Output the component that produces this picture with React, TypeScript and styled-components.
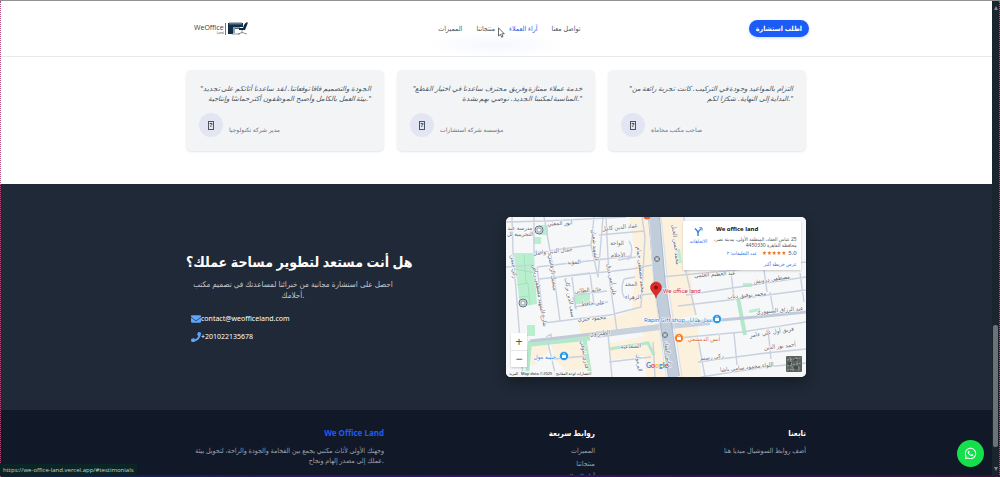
import React from "react";
import styled, { createGlobalStyle } from "styled-components";
import { FaEnvelope, FaPhone, FaWhatsapp } from "react-icons/fa";

const narrow = `"Noto Sans", "DejaVu Sans Condensed", "DejaVu Sans", sans-serif`;
const regular = `"Noto Sans", "DejaVu Sans", sans-serif`;

const GlobalStyle = createGlobalStyle`
  * { box-sizing: border-box; }
  body {
    margin: 0;
    background: #fff;
    font-family: ${narrow};
    color: #4b5563;
  }
  h2, h3, p, ul, figure, blockquote { margin: 0; padding: 0; }
  ul { list-style: none; }
  a { color: inherit; text-decoration: none; }
`;

const Window = styled.div`
  position: relative;
  display: grid;
  grid-template-columns: minmax(0, 1fr) 8px;
  grid-template-rows: 100%;
  height: 100vh;
  overflow: hidden;
  border-top: 1px solid #929292;
`;

const Page = styled.div`
  min-width: 0;
  display: flex;
  flex-direction: column;
  overflow: hidden;
`;

const Container = styled.div<{ $wide?: boolean }>`
  width: 100%;
  max-width: ${(p) => (p.$wide ? 626 : 620)}px;
  margin: 0 auto;
`;

const Header = styled.header`
  flex: none;
  background: radial-gradient(ellipse 72px 12px at 50% 44px, #f5f7fe, #fff);
  border-bottom: 1px solid #e8eaed;
`;

const HeaderRow = styled(Container)`
  display: flex;
  justify-content: space-between;
  align-items: center;
  height: 55px;
`;

const LogoLink = styled.a`
  display: flex;
  align-items: center;
  gap: 2px;
  width: 87px;
  padding-left: 11px;
  svg { display: block; }
`;

const LogoWords = styled.span`
  display: grid;
  justify-items: end;
  padding-right: 1px;
  border-right: 1px solid #6b7780;
  font: 7px/9px "Open Sans", sans-serif;
  color: #33424d;
  small { font-size: 3px; line-height: 3px; }
`;

const Nav = styled.nav`
  display: flex;
  gap: 14px;
`;

const NavLink = styled.a<{ $active?: boolean }>`
  font-size: 7px;
  line-height: 12px;
  color: ${(p) => (p.$active ? "#2563eb" : "#4b5563")};
`;

const ConsultButton = styled.button`
  height: 17px;
  padding: 0 7px;
  border: 0;
  border-radius: 9px;
  background: #1b5cf5;
  color: #fff;
  font: 700 7px/16px ${narrow};
  box-shadow: 0 1px 3px #1b5cf540;
`;

const Testimonials = styled.section`
  flex: none;
  padding: 13px 0 33px;
  background: #fff;
`;

const CardGrid = styled(Container)`
  display: grid;
  grid-template-columns: repeat(3, 1fr);
  gap: 13px;
`;

const Card = styled.figure`
  min-height: 81px;
  padding: 14px 13px;
  border-radius: 5px;
  background: #f3f4f6;
  box-shadow: 0 1px 2px #0000001a;
`;

const Quote = styled.blockquote`
  font-family: ${regular};
  font-size: 7px;
  line-height: 10px;
  font-style: italic;
  text-align: right;
  white-space: pre-line;
`;

const Author = styled.figcaption`
  display: flex;
  align-items: center;
  gap: 6px;
  margin-top: 9px;
  font-size: 6px;
  line-height: 8px;
  color: #6b7280;
`;

const Avatar = styled.span`
  display: grid;
  place-items: center;
  width: 24px;
  height: 24px;
  border-radius: 50%;
  background: #e3e6f2;
`;

const MissingGlyph = styled.span`
  width: 6px;
  height: 9px;
  border: 1px solid #4b5563;
  font-size: 6px;
  font-weight: 700;
  line-height: 7px;
  text-align: center;
  color: #1f2937;
`;

const Role = styled.span`
  padding-top: 9px;
  font-family: ${regular};
`;

const Contact = styled.section`
  flex: none;
  padding: 33px 0;
  background: #1f2937;
`;

const ContactGrid = styled(Container)`
  display: grid;
  grid-template-columns: 1fr 1fr;
  gap: 20px;
  align-items: center;
`;

const Pitch = styled.div`
  justify-self: start;
  color: #fff;
  h2 { font-size: 14px; line-height: 20px; font-weight: 700; }
`;

const Lead = styled.p`
  width: 214px;
  margin-top: 6px;
  font-size: 8px;
  line-height: 11px;
  text-align: center;
  white-space: pre-line;
  color: #c3c8d0;
`;

const ContactLink = styled.a`
  display: flex;
  align-items: center;
  margin: 6px 0 0 5px;
  font-size: 7px;
  line-height: 12px;
  svg { color: #60a5fa; }
`;

const Links = styled.div`
  margin-top: 13px;
`;

const MapFrame = styled.div`
  position: relative;
  overflow: hidden;
  border-radius: 5px;
  background: #f5f6f8;
  box-shadow: 0 6px 14px #0000004d;
  > svg { display: block; width: 100%; }
`;

const PlaceCard = styled.aside`
  position: absolute;
  top: 4px;
  right: 5px;
  width: 118px;
  height: 49px;
  display: grid;
  grid-template-columns: 31px 1fr;
  padding: 4px 5px 0 0;
  background: #fff;
  box-shadow: 0 1px 2px #0003;
  font-size: 5px;
  line-height: 6px;
`;

const Directions = styled.a`
  display: flex;
  flex-direction: column;
  align-items: center;
  gap: 2px;
  padding-top: 2px;
  color: #1a73e8;
`;

const PlaceInfo = styled.div`
  text-align: right;
  white-space: nowrap;
  strong {
    display: block;
    margin-bottom: 3px;
    padding-left: 2px;
    font: 700 6px/8px "Noto Sans", sans-serif;
    color: #111;
    text-align: left;
  }
  a { color: #1a73e8; }
`;

const Rating = styled.p`
  display: flex;
  justify-content: flex-end;
  align-items: center;
  gap: 2px;
  margin: 2px 0 4px;
  line-height: 7px;
  b { font-weight: 400; font-size: 6px; }
  span { color: #e7711b; font-size: 6px; }
  a { margin-right: 3px; }
`;

const ZoomBox = styled.div`
  position: absolute;
  left: 5px;
  bottom: 10px;
  width: 16px;
  display: grid;
  background: #fff;
  box-shadow: 0 1px 2px #0003;
`;

const ZoomButton = styled.button`
  height: 17px;
  padding: 0;
  border: 0;
  background: none;
  font: 12px/16px "Liberation Sans", sans-serif;
  color: #555;
  & + & { border-top: 1px solid #e6e6e6; }
`;

const Footer = styled.footer`
  flex: 1 0 auto;
  padding: 16px 0 20px;
  background: #111827;
  color: #9ca3af;
  font-size: 7px;
  line-height: 10px;
`;

const FooterColumn = styled.div`
  text-align: right;
  p { white-space: pre-line; margin-top: 6px; }
  ul { margin-top: 6px; }
  li { margin-bottom: 3px; }
`;

const FooterTitle = styled.h3<{ $brand?: boolean }>`
  font-size: 8px;
  line-height: 14px;
  font-weight: 700;
  color: ${(p) => (p.$brand ? "#1f5bf2" : "#fff")};
`;

const ScrollTrack = styled.div`
  display: flex;
  flex-direction: column;
  align-items: center;
  justify-content: space-between;
  padding: 3px 0 4px;
  background: #1b252d;
  border-right: 1px dotted #b0507c;
`;

const ScrollArrow = styled.i<{ $down?: boolean }>`
  border: 2px solid transparent;
  border-${(p) => (p.$down ? "top" : "bottom")}: 4px solid #87898c;
`;

const ScrollThumb = styled.span`
  width: 5px;
  height: 26%;
  margin: auto 0 20px;
  border-radius: 2px;
  background: #6b7278;
`;

const StatusBar = styled.output`
  position: absolute;
  left: 0;
  bottom: 1px;
  padding: 0 3px;
  background: #0b2526;
  color: #c5d0cf;
  font: 6px/12px "Open Sans", sans-serif;
`;

const BottomLine = styled.div`
  position: absolute;
  left: 0;
  right: 0;
  bottom: 0;
  height: 2px;
  background: linear-gradient(90deg, #14213a, #14205a 12%, #35106a 45%, #3a0d55 80%, #3b1138);
`;

const LeftEdge = styled.div`
  position: absolute;
  left: 0;
  top: 0;
  bottom: 0;
  border-left: 1px dotted #b0507c;
`;

const ChatButton = styled.a`
  position: absolute;
  right: 16px;
  bottom: 10px;
  width: 27px;
  height: 27px;
  display: grid;
  place-items: center;
  border-radius: 50%;
  background: #15e04c;
  color: #fff;
`;

const Pointer = styled.svg`
  position: absolute;
  left: 498px;
  top: 26px;
`;

const reviews = [
  {
    quote: "\"الجودة والتصميم فاقا توقعاتنا. لقد ساعدنا أثاثكم على تجديد\nبيئة العمل بالكامل وأصبح الموظفون أكثر حماسًا وإنتاجية.\"",
    role: "مدير شركة تكنولوجيا",
  },
  {
    quote: "\"خدمة عملاء ممتازة وفريق محترف ساعدنا في اختيار القطع\nالمناسبة لمكتبنا الجديد. نوصي بهم بشدة.\"",
    role: "مؤسسة شركة استشارات",
  },
  {
    quote: "\"التزام بالمواعيد وجودة في التركيب. كانت تجربة رائعة من\nالبداية إلى النهاية. شكرًا لكم.\"",
    role: "صاحب مكتب محاماة",
  },
];

const navItems = [
  { label: "المميزات", href: "#features" },
  { label: "منتجاتنا", href: "#products" },
  { label: "آراء العملاء", href: "#testimonials", active: true },
  { label: "تواصل معنا", href: "#contact" },
];

/* street name, centre x, centre y, angle */
const streets: [string, number, number, number][] = [
  ["أنور المفتي", 54, 8, -3],
  ["مدرسة عبد", 14, 13, 0],
  ["التجريبية لل", 14, 19, 0],
  ["عماد الدين كامل", 114, 12, -6],
  ["جمال الدين واصل", 47, 36, -6],
  ["الواحة", 111, 28, 0],
  ["الأحلام", 112, 40, 0],
  ["المؤيد", 68, 47, -2],
  ["حاتم الطائي", 82, 75, -4],
  ["علي حافظ", 87, 88, -4],
  ["محمود خيري", 86, 103, -4],
  ["الطيراوي", 94, 118, -5],
  ["الشماعية", 125, 131, -3],
  ["زكي حسن", 6, 50, 84],
  ["شارع الشهيد مصطفى رياض", 32, 79, 80],
  ["ميشيل الرقاشي", 45, 56, 82],
  ["سيف الدين بركات", 62, 81, 80],
  ["الشهيد شعبان", 87, 28, 84],
  ["علي أمين رزق", 104, 63, 80],
  ["محمد مصطفى حمام", 133, 53, 84],
  ["المجد", 125, 69, 0],
  ["الزهراء", 127, 82, 0],
  ["قدري شوقي", 77, 138, 80],
  ["اليرموك", 131, 146, 82],
  ["عبد العظيم العلمي", 209, 59, -4],
  ["مصطفى درويش", 266, 64, -8],
  ["محمد توفيق دياب", 241, 80, -5],
  ["عبد الرزاق السنهوري", 274, 95, -5],
  ["فريق أول علي عامر", 266, 117, -9],
  ["أحمد نور الدين", 274, 131, -6],
  ["زكي رستم", 206, 142, -6],
  ["اللواء محمود سامي باشا", 241, 152, -6],
  ["محمد حسن الجبل", 168, 28, 84],
  ["عباس العقاد", 160, 138, 82],
];

const minorRoads =
  "M0 5L40 4L120 0M6 0L7 35L17 160M38 0L46 45L54 104M0 50L28 48M28 36L85 28L88 0M85 28L92 60L97 0M28 36L28 0M31 50L90 43L126 39M33 62L52 60L126 52L146 48M31 50L38 106M52 60L84 56M68 78L101 74M68 90L102 85M84 56L88 88M66 60L70 92L67 80M38 106L70 102L104 98L135 90L139 20L136 0M100 0L103 60L111 114M93 18L138 14M123 24Q129 33 122 43M112 43L130 40M118 62Q114 72 118 80L128 83M118 62L129 60M135 78L152 76M40 120L45 117L45 124M42 126L50 160M48 142L80 139M102 117L106 160M103 145L145 140M147 125L149 160M178 0L180 55L190 98M155 60L230 53L300 45M180 78L300 60M172 89L232 82L300 73M225 56L228 80M258 53L261 75M264 75L268 98M294 56L298 85M172 121L236 115L300 105M192 121L199 160M228 116L231 148M262 112L265 142M192 145L260 136L300 132M195 160L260 150L300 146";

const Badge = ({ x, y, color }: { x: number; y: number; color: string }) => (
  <g>
    <circle cx={x} cy={y} r="4.5" fill={color} stroke="#fff" strokeWidth=".6" />
    <rect x={x - 2} y={y - 1} width="4" height="3" rx=".5" fill="#fff" />
    <path d={`M${x - 1} ${y - 1}v-.6a1 1 0 0 1 2 0v.6`} fill="none" stroke="#fff" strokeWidth=".6" />
  </g>
);

const Metro = ({ x, y, r }: { x: number; y: number; r: number }) => (
  <g fill="#fff" stroke="#60727d">
    <circle cx={x} cy={y} r={r} strokeWidth="1" />
    <rect x={x - r / 2} y={y - r / 2} width={r} height={r} rx=".5" strokeWidth=".8" />
  </g>
);

const StreetMap = () => (
  <svg viewBox="0 0 300 160" role="img" aria-label="We office land">
    <rect width="300" height="160" fill="#f6f7f9" />
    <g fill="#fcf1dc">
      <path d="M123 0H146L150 50L158 160H140L136 95L126 95L130 40Z" />
      <path d="M155 0H177L185 60L190 98L166 103Z" />
      <path d="M72 105L108 100L134 91L154 88V106L75 117Z" />
      <path d="M46 128L78 123L84 152L60 154L48 142Z" />
      <path d="M22 128L42 126L43 134L26 150Z" />
      <path d="M170 108L192 106L195 160H174Z" />
      <path d="M103 126L146 118V138L104 143Z" />
    </g>
    <g fill="#b9efce">
      <path d="M8 36H28L31 87L14 90Z" />
      <rect x="27" y="20" width="8" height="7" />
      <rect x="33" y="8" width="9" height="10" />
      <rect x="69" y="76" width="15" height="11" />
      <rect x="21" y="108" width="8" height="11" />
      <rect x="237" y="66" width="9" height="4" />
      <path d="M243 93L254 91V94L243 96ZM170 32L174 32L176 46L172 46Z" />
    </g>
    <g stroke="#b4e8ca" fill="none">
      <path d="M25 127L84 121" strokeWidth="5" />
      <path d="M24 124L21 160M78 120L84 156" strokeWidth="4" />
      <path d="M232 81L239 118" strokeWidth="4" />
      <path d="M103 132L142 126L148 138M172 108L192 102" strokeWidth="3" />
      <path d="M9 52L29 56M11 68L22 66L24 88M18 38L20 66M13 80L23 79" stroke="#92d9ae" strokeWidth=".6" />
    </g>
    <path d={minorRoads} fill="none" stroke="#c9d1de" strokeWidth="1.4" strokeLinejoin="round" />
    <path d="M24 124L60 120L103 115L154 109L204 104L250 100L300 95" fill="none" stroke="#c0cad8" strokeWidth="3" />
    <path d="M90 118L154 110L204 105" fill="none" stroke="#c8d2df" strokeWidth="6" />
    <path d="M148 0L154 68L168 160" fill="none" stroke="#adb9ca" strokeWidth="12" />
    <path d="M148 0L154 68L168 160" fill="none" stroke="#c2cddb" strokeWidth="10" />
    <path d="M143 0L148 68L160 160M155 0L162 68L176 160" fill="none" stroke="#d8dfe9" strokeWidth="1" />
    <g fontSize="6" fill="#5f6875" stroke="#fff" strokeWidth="1" paintOrder="stroke" textAnchor="middle">
      {streets.map(([name, x, y, angle]) => (
        <text key={name} x={x} y={y} transform={`rotate(${angle} ${x} ${y})`}>{name}</text>
      ))}
    </g>
    <Metro x={33} y={13} r={4} />
    <Metro x={17} y={86} r={4} />
    <Metro x={151} y={42} r={2.5} />
    <Metro x={159} y={118} r={2.5} />
    <Badge x={58} y={139} color="#1c95e8" />
    <Badge x={211} y={102} color="#1c95e8" />
    <Badge x={173} y={121} color="#f27b24" />
    <circle cx="141" cy="-1" r="3.5" fill="#f0642b" />
    <g fontSize="6" stroke="#fff" strokeWidth="1" paintOrder="stroke">
      <text x="39" y="142" fill="#2b7fdc" textAnchor="middle">حبيبة مول</text>
      <g fill="#2b7fdc" fontFamily={`Roboto, "DejaVu Sans Condensed", sans-serif`}>
        <text x="138" y="105">Rapin Gift shop</text>
        <text x="206" y="105" textAnchor="end">محل هدايا</text>
      </g>
      <text x="198" y="124" fill="#dd6a1c" textAnchor="middle">أنس الدمشقي</text>
      <text x="157" y="76" fill="#c9253b" fontFamily="Roboto, sans-serif">We office land</text>
    </g>
    <path d="M150 81C149.500 76.500 144.500 75 144.500 70.500a5.500 5.500 0 0 1 11 0C155.500 75 150.500 76.500 150 81Z" fill="#e02a2a" stroke="#b31412" strokeWidth=".5" />
    <circle cx="150" cy="70.500" r="2" fill="#8c1111" />
    <text x="140" y="151" fontSize="7" fontWeight="700" fontFamily="Lato, sans-serif">
      <tspan fill="#4285f4">G</tspan><tspan fill="#ea4335">o</tspan><tspan fill="#fbbc05">o</tspan><tspan fill="#4285f4">g</tspan><tspan fill="#34a853">l</tspan><tspan fill="#ea4335">e</tspan>
    </text>
    <rect y="154" width="86" height="6" fill="#f5f5f5" opacity=".8" />
    <g fontSize="4" fill="#222">
      <text x="3" y="158">المزيد</text>
      <text x="15" y="158">Map data ©2025</text>
      <text x="50" y="158">اختصارات لوحة المفاتيح</text>
    </g>
    <rect x="280" y="139" width="16" height="16" rx="1" fill="#5c6260" />
    <path d="M281 143l14-2M281 149l14-3M284 140l3 14M290 140l3 14M281 153l13-2" stroke="#9aa09c" strokeWidth="1" strokeDasharray="2 1" />
    <path d="M282 145h3v3h-3zM288 142h3v2h-3zM288 149h4v3h-4z" fill="#454c4a" />
  </svg>
);

const DeskLogo = () => (
  <svg width="20" height="13" viewBox="0 0 20 13">
    <path d="M0 1H15V5H11V7H5V12H0Z" fill="#12304a" />
    <path d="M1 .5H14V2.500H1Z" fill="#5f7685" />
    <path d="M5 5H12V6.500H7V11H5Z" fill="#8da0ab" />
    <path d="M11 6H15L16 3L18 .5H20L17 8H11Z" fill="#12293a" />
    <path d="M4 12H12M14 8V11M10 12L14 10.500L19 12" stroke="#596872" strokeWidth=".7" fill="none" />
  </svg>
);

const TurnIcon = () => (
  <svg width="9" height="9" viewBox="0 0 9 9" fill="none" stroke="#3f83d8">
    <path d="M4 9V6Q4 4.500 2.500 3L1 1.500M4 6Q4 4 7 2" strokeWidth="1.500" />
    <path d="M5.300 .8H8V3.500" strokeWidth="1" />
  </svg>
);

export default function App() {
  return (
    <Window>
      <GlobalStyle />
      <Page>
        <Header>
          <HeaderRow $wide>
            <LogoLink href="#home" aria-label="We Office Land">
              <LogoWords>WeOffice<small>Land</small></LogoWords>
              <DeskLogo />
            </LogoLink>
            <Nav>
              {navItems.map((item) => (
                <NavLink key={item.href} href={item.href} $active={item.active}>{item.label}</NavLink>
              ))}
            </Nav>
            <ConsultButton type="button">اطلب استشارة</ConsultButton>
          </HeaderRow>
        </Header>
        <Testimonials id="testimonials">
          <CardGrid>
            {reviews.map((review) => (
              <Card key={review.role}>
                <Quote>{review.quote}</Quote>
                <Author>
                  <Avatar><MissingGlyph>?</MissingGlyph></Avatar>
                  <Role>{review.role}</Role>
                </Author>
              </Card>
            ))}
          </CardGrid>
        </Testimonials>
        <Contact id="contact">
          <ContactGrid>
            <Pitch>
              <h2>هل أنت مستعد لتطوير مساحة عملك؟</h2>
              <Lead>{"احصل على استشارة مجانية من خبرائنا لمساعدتك في تصميم مكتب\nأحلامك."}</Lead>
              <Links>
                <ContactLink href="mailto:contact@weofficeland.com"><FaEnvelope size={10} />contact@weofficeland.com</ContactLink>
                <ContactLink href="tel:+201022135678"><FaPhone size={10} />+201022135678</ContactLink>
              </Links>
            </Pitch>
            <MapFrame>
              <StreetMap />
              <PlaceCard>
                <Directions href="#directions"><TurnIcon />الاتجاهات</Directions>
                <PlaceInfo>
                  <strong>We office land</strong>
                  <p dir="rtl">25 عباس العقاد، المنطقة الأولى، مدينة نصر،</p>
                  <p dir="rtl">محافظة القاهرة 4450330</p>
                  <Rating><a href="#reviews" dir="rtl">عدد التعليقات: ٢</a><span>★★★★★</span><b>5.0</b></Rating>
                  <a href="#map">عرض خريطة أكبر</a>
                </PlaceInfo>
              </PlaceCard>
              <ZoomBox>
                <ZoomButton type="button" aria-label="Zoom in">+</ZoomButton>
                <ZoomButton type="button" aria-label="Zoom out">−</ZoomButton>
              </ZoomBox>
            </MapFrame>
          </ContactGrid>
        </Contact>
        <Footer>
          <CardGrid>
            <FooterColumn>
              <FooterTitle $brand>We Office Land</FooterTitle>
              <p>{"وجهتك الأولى لأثاث مكتبي يجمع بين الفخامة والجودة والراحة، لتحويل بيئة\nعملك إلى مصدر إلهام ونجاح."}</p>
            </FooterColumn>
            <FooterColumn>
              <FooterTitle>روابط سريعة</FooterTitle>
              <ul>
                <li><a href="#features">المميزات</a></li>
                <li><a href="#products">منتجاتنا</a></li>
                <li><a href="#testimonials">آراء العملاء</a></li>
              </ul>
            </FooterColumn>
            <FooterColumn>
              <FooterTitle>تابعنا</FooterTitle>
              <p>أضف روابط السوشيال ميديا هنا</p>
            </FooterColumn>
          </CardGrid>
        </Footer>
      </Page>
      <ScrollTrack>
        <ScrollArrow />
        <ScrollThumb />
        <ScrollArrow $down />
      </ScrollTrack>
      <BottomLine />
      <LeftEdge />
      <StatusBar>https://we-office-land.vercel.app/#testimonials</StatusBar>
      <ChatButton href="#whatsapp" aria-label="WhatsApp"><FaWhatsapp size={13} /></ChatButton>
      <Pointer width="7" height="11" viewBox="0 0 7 11">
        <path d="M.5.8V9L2.400 7.300L3.700 10.200L5 9.600L3.800 6.800H6.300Z" fill="#fff" stroke="#444" strokeWidth=".8" />
      </Pointer>
    </Window>
  );
}
